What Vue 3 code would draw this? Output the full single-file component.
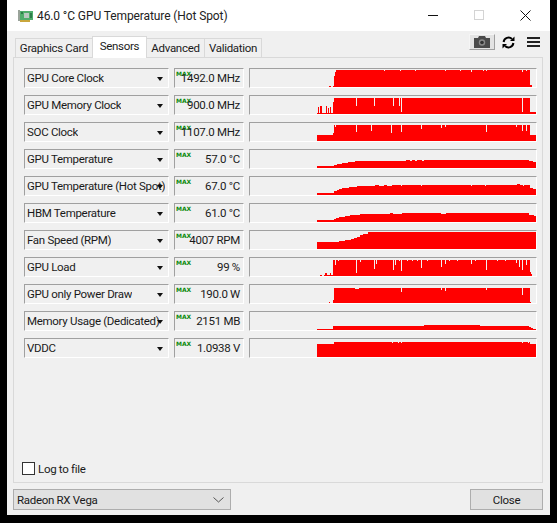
<template>
  <div class="window">
    <!-- 타이틀바 -->
    <div class="titlebar">
      <svg class="app-icon" width="15" height="12" viewBox="0 0 15 12">
        <rect x="0" y="0" width="2" height="11" fill="#9aa39a" />
        <rect x="2" y="1" width="13" height="9" fill="#4fae6c" />
        <rect x="2" y="10" width="10" height="2" fill="#c9a63c" />
        <rect x="6" y="3" width="5" height="5" fill="#b9c9c0" />
        <rect x="3" y="2" width="2" height="2" fill="#2e7d4a" />
        <rect x="12" y="3" width="2" height="5" fill="#2e7d4a" />
      </svg>
      <span class="title-text">46.0 °C GPU Temperature (Hot Spot)</span>
      <div class="window-controls">
        <svg width="11" height="11" viewBox="0 0 11 11"><path d="M0 5.5H10" stroke="#111" fill="none" /></svg>
        <svg width="11" height="11" viewBox="0 0 11 11"><rect x="0.5" y="0.5" width="9" height="9" stroke="#d4d4d4" fill="none" /></svg>
        <svg width="11" height="11" viewBox="0 0 11 11"><path d="M0.5 0.5L10.5 10.5M10.5 0.5L0.5 10.5" stroke="#111" fill="none" /></svg>
      </div>
    </div>

    <div class="body">
      <!-- 탭 -->
      <div class="tab-row">
        <div class="tabs">
          <div
            v-for="tab in tabs"
            :key="tab.name"
            class="tab"
            :class="[tab.cls, { active: tab.name === 'Sensors' }]"
          >
            {{ tab.name }}
          </div>
        </div>
        <div class="tools">
          <button class="camera-button">
            <svg width="18" height="12" viewBox="0 0 18 12">
              <path d="M1 2H5L6 0H12L13 2H17V12H1Z" fill="#4a4a4a" />
              <circle cx="9" cy="6.5" r="3.2" fill="#8a8a8a" />
              <circle cx="9" cy="6.5" r="1.8" fill="#333" />
            </svg>
          </button>
          <svg class="refresh" width="13" height="13" viewBox="0 0 13 13">
            <path d="M1.6 6A5 5 0 0 1 10 3" stroke="#000" stroke-width="2" fill="none" />
            <path d="M8 5H12.5V0.5Z" fill="#000" />
            <path d="M11.4 7A5 5 0 0 1 3 10" stroke="#000" stroke-width="2" fill="none" />
            <path d="M5 8H0.5V12.5Z" fill="#000" />
          </svg>
          <div class="menu-icon"><i></i><i></i><i></i></div>
        </div>
      </div>

      <!-- 센서 패널 -->
      <div class="panel">
        <div class="sensor-list">
          <div v-for="row in rows" :key="row.name" class="sensor-row">
            <div class="sensor-name sunken">
              <span class="name-text">{{ row.name }}</span>
              <span class="arrow"></span>
            </div>
            <div class="sensor-value sunken">
              <span class="max-tag">MAX</span>
              <span class="value-text">{{ row.value }}</span>
            </div>
            <div class="sensor-graph sunken">
              <svg width="287" height="18" viewBox="0 0 287 18" shape-rendering="crispEdges">
                <path :d="graphPath(row)" fill="#ff0000" />
                <path :d="notchPath(row)" fill="#f0f0f0" />
              </svg>
            </div>
          </div>
        </div>
        <label class="log-check">
          <span class="checkbox"></span>
          <span>Log to file</span>
        </label>
      </div>

      <!-- 하단 -->
      <div class="footer">
        <div class="device-select">
          <span>Radeon RX Vega</span>
          <svg width="11" height="6" viewBox="0 0 11 6"><path d="M0.5 0.5L5.5 5L10.5 0.5" stroke="#555" fill="none" /></svg>
        </div>
        <button class="close-button">Close</button>
      </div>
    </div>
  </div>
</template>

<script setup>
const tabs = [
  { name: "Graphics Card", cls: "tab-card" },
  { name: "Sensors", cls: "tab-sensors" },
  { name: "Advanced", cls: "tab-advanced" },
  { name: "Validation", cls: "tab-validation" }
];

// steps: [x, top] 계단, 마지막 항목은 끝 x / notches: [x, top] 1px 홈
// top 값은 행 위쪽 테두리 기준
const rows = [
  {
    name: "GPU Core Clock",
    value: "1492.0 MHz",
    steps: [[80, 18], [82, 19], [84, 18], [85, 8], [86, 4], [87, 2], [281, 17], [283, 19]],
    notches: [[135, 3], [151, 3], [166, 3], [196, 3], [211, 3], [222, 4], [234, 3], [237, 3], [273, 4], [277, 3]]
  },
  {
    name: "GPU Memory Clock",
    value: "900.0 MHz",
    steps: [
      [68, 18], [69, 12], [70, 18], [71, 11], [73, 18], [77, 11], [78, 18], [79, 13], [80, 18],
      [81, 12], [82, 18], [84, 7], [85, 3], [281, 17], [287, 19]
    ],
    notches: [[107, 11], [125, 11], [144, 11], [150, 11], [152, 17], [273, 17]]
  },
  {
    name: "SOC Clock",
    value: "1107.0 MHz",
    steps: [[68, 13], [84, 11], [85, 3], [86, 5], [87, 3], [281, 13], [287, 19]],
    notches: [[107, 10], [122, 9], [142, 11], [152, 10], [172, 7], [192, 6], [196, 5], [237, 10], [267, 5], [273, 9], [277, 9]]
  },
  {
    name: "GPU Temperature",
    value: "57.0 °C",
    steps: [[68, 17], [85, 16], [88, 15], [93, 14], [99, 13], [106, 12], [157, 11], [161, 12], [163, 11], [166, 12], [168, 11], [173, 12], [175, 11], [280, 12], [284, 13], [287, 19]],
    notches: []
  },
  {
    name: "GPU Temperature (Hot Spot)",
    value: "67.0 °C",
    steps: [[68, 17], [85, 15], [88, 14], [90, 13], [93, 12], [100, 11], [108, 10], [126, 9], [130, 10], [135, 9], [138, 10], [143, 9], [268, 8], [271, 9], [281, 12], [284, 13], [287, 19]],
    notches: [[152, 10], [172, 10], [222, 10], [236, 10], [274, 10]]
  },
  {
    name: "HBM Temperature",
    value: "61.0 °C",
    steps: [[68, 17], [85, 16], [87, 15], [90, 14], [96, 13], [101, 12], [111, 11], [141, 10], [144, 11], [153, 10], [192, 11], [197, 10], [280, 12], [285, 13], [287, 19]],
    notches: []
  },
  {
    name: "Fan Speed (RPM)",
    value: "4007 RPM",
    steps: [[68, 12], [90, 11], [96, 10], [102, 9], [105, 8], [108, 7], [111, 5], [114, 4], [119, 2], [287, 19]],
    notches: []
  },
  {
    name: "GPU Load",
    value: "99 %",
    steps: [[71, 18], [73, 19], [75, 18], [76, 16], [78, 18], [81, 16], [82, 18], [84, 3], [281, 15], [282, 17], [283, 19]],
    notches: [
      [86, 8], [89, 4], [107, 16], [111, 5], [125, 12], [127, 7], [144, 13], [146, 8], [150, 4], [152, 14],
      [158, 4], [163, 4], [168, 4], [172, 11], [178, 4], [192, 10], [196, 7], [200, 4], [208, 4], [222, 7],
      [226, 4], [237, 13], [248, 4], [256, 4], [267, 6], [270, 10], [273, 13], [277, 8]
    ]
  },
  {
    name: "GPU only Power Draw",
    value: "190.0 W",
    steps: [[80, 18], [81, 19], [84, 16], [85, 4], [106, 5], [110, 4], [281, 18], [282, 19]],
    notches: [[122, 4], [128, 4], [152, 8], [172, 4], [192, 6], [196, 7], [237, 6], [273, 11], [277, 4]]
  },
  {
    name: "Memory Usage (Dedicated)",
    value: "2151 MB",
    steps: [[68, 18], [84, 15], [175, 14], [231, 15], [280, 16], [282, 17], [284, 18], [287, 19]],
    notches: []
  },
  {
    name: "VDDC",
    value: "1.0938 V",
    steps: [[68, 6], [85, 4], [281, 6], [287, 19]],
    notches: [[143, 5], [149, 5], [152, 5], [273, 5], [279, 5]]
  }
];

// 그래프 영역 y = 행 top - 1, 바닥은 18
const graphPath = (row) => {
  let d = "";
  for (let i = 0; i < row.steps.length - 1; i++) {
    const [x, top] = row.steps[i];
    const nextX = row.steps[i + 1][0];
    if (top >= 19 || nextX <= x) continue;
    d += `M${x} ${top - 1}H${nextX}V18H${x}Z`;
  }
  return d;
};

const notchPath = (row) =>
  row.notches.map(([x, top]) => `M${x} 0H${x + 1}V${top - 1}H${x}Z`).join("");
</script>

<style scoped>
* {
  box-sizing: border-box;
}

.window {
  width: 543px;
  height: 515px;
  margin-left: 7px;
  background: #f0f0f0;
  display: flex;
  flex-direction: column;
  font-family: Roboto, "Liberation Sans", sans-serif;
  font-size: 11.5px;
  letter-spacing: -0.3px;
  color: #1a1a1a;
}

.titlebar {
  height: 31px;
  flex: none;
  background: #fff;
  display: flex;
  align-items: center;
  padding: 0 19px 0 11px;
}

.app-icon {
  margin-right: 4px;
}

.title-text {
  font-size: 12px;
  letter-spacing: -0.1px;
  color: #222;
}

.window-controls {
  margin-left: auto;
  display: flex;
  gap: 35px;
}

.body {
  flex: 1;
  display: flex;
  flex-direction: column;
  padding: 5px 7px 5px 6px;
}

.tab-row {
  height: 21px;
  flex: none;
  display: flex;
  align-items: flex-end;
  justify-content: space-between;
  position: relative;
  z-index: 1;
}

.tabs {
  display: flex;
  align-items: flex-end;
  padding-left: 2px;
  height: 100%;
}

.tab {
  height: 19px;
  display: flex;
  align-items: center;
  justify-content: center;
  background: #f0f0f0;
  border: 1px solid #d9d9d9;
  border-bottom: none;
  white-space: nowrap;
}

.tab + .tab {
  margin-left: -1px;
}

.tab-card {
  width: 78px;
}

.tab-sensors {
  width: 55px;
}

.tab-advanced {
  width: 59px;
}

.tab-validation {
  width: 58px;
}

.tab.active {
  height: 22px;
  background: #fff;
  padding-bottom: 3px;
  margin-bottom: -1px;
  position: relative;
}

.tools {
  display: flex;
  align-items: center;
  align-self: flex-start;
  margin-top: -2px;
  padding-right: 3px;
}

.camera-button {
  width: 26px;
  height: 16px;
  padding: 0;
  background: #e3e3e3;
  border: 1px solid;
  border-color: #f5f5f5 #a0a0a0 #a0a0a0 #f5f5f5;
  display: flex;
  align-items: center;
  justify-content: center;
}

.refresh {
  margin-left: 7px;
}

.menu-icon {
  margin-left: 12px;
  width: 13px;
  display: flex;
  flex-direction: column;
  gap: 2px;
}

.menu-icon i {
  display: block;
  height: 2px;
  background: #222;
}

.panel {
  height: 426px;
  flex: none;
  border: 1px solid #d9d9d9;
  display: flex;
  flex-direction: column;
  padding: 10px 5px 7px 10px;
}

.sensor-list {
  display: flex;
  flex-direction: column;
  gap: 7px;
}

.sensor-row {
  height: 20px;
  display: flex;
  gap: 5px;
}

.sunken {
  height: 20px;
  border: 1px solid;
  border-color: #a0a0a0 #fff #fff #a0a0a0;
  background: #f0f0f0;
  position: relative;
}

.sensor-name {
  width: 145px;
  display: flex;
  align-items: center;
  padding: 0 0 1px 2px;
  white-space: nowrap;
}

.name-text {
  flex: none;
  max-width: 138px;
  overflow: hidden;
}

.arrow {
  position: absolute;
  right: 5px;
  top: 8px;
  width: 0;
  height: 0;
  border: 3.5px solid transparent;
  border-top: 4px solid #111;
  border-bottom: none;
}

.sensor-value {
  width: 70px;
  display: flex;
  align-items: center;
  justify-content: flex-end;
  padding: 0 3px 1px 0;
  white-space: nowrap;
}

.max-tag {
  position: absolute;
  left: 1px;
  top: 1px;
  font-family: "DejaVu Sans", sans-serif;
  font-size: 6px;
  line-height: 7px;
  font-weight: 700;
  letter-spacing: 0;
  color: #0a8a0a;
}

.value-text {
  position: relative;
}

.sensor-graph {
  width: 288px;
}

.sensor-graph svg {
  display: block;
  margin-left: -1px;
}

.log-check {
  margin-top: auto;
  margin-left: -2px;
  display: flex;
  align-items: center;
  gap: 3px;
  height: 13px;
}

.checkbox {
  width: 13px;
  height: 13px;
  background: #fff;
  border: 1px solid #333;
}

.footer {
  flex: 1;
  display: flex;
  align-items: flex-end;
  justify-content: space-between;
}

.device-select {
  width: 218px;
  height: 21px;
  background: #e1e1e1;
  border: 1px solid #adadad;
  display: flex;
  align-items: center;
  justify-content: space-between;
  padding: 0 6px 0 3px;
}

.close-button {
  width: 73px;
  height: 21px;
  padding: 0;
  background: #e1e1e1;
  border: 1px solid #adadad;
  font-family: inherit;
  font-size: 11.5px;
  letter-spacing: -0.3px;
  color: #1a1a1a;
}
</style>

<style>
html,
body {
  background: #000;
  margin: 0;
}
</style>
